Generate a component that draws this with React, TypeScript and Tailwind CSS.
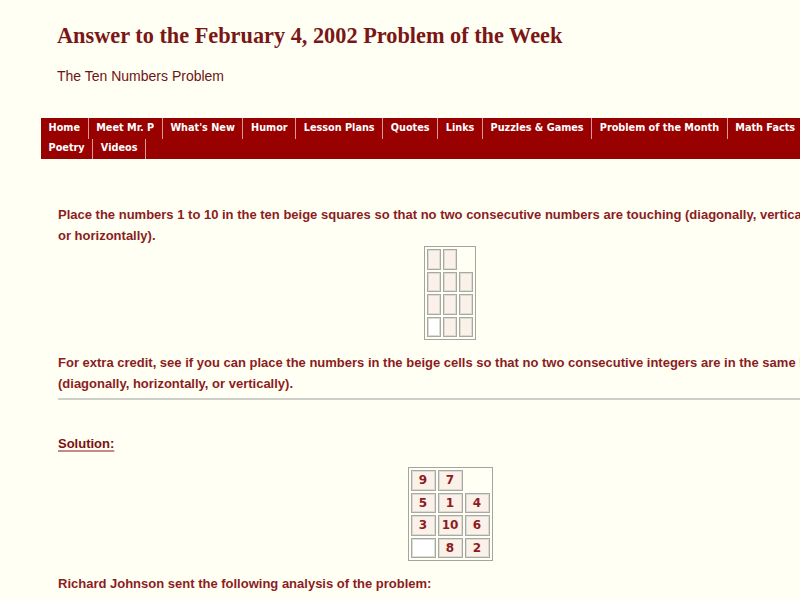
const navRow1 = ['Home', 'Meet Mr. P', "What's New", 'Humor', 'Lesson Plans', 'Quotes', 'Links', 'Puzzles & Games', 'Problem of the Month', 'Math Facts'];
const navRow2 = ['Poetry', 'Videos'];

// null = no cell, '' = white cell, '#' = empty beige cell
const puzzle: (string | null)[][] = [
  ['#', '#', null],
  ['#', '#', '#'],
  ['#', '#', '#'],
  ['', '#', '#'],
];

const solution: (string | null)[][] = [
  ['9', '7', null],
  ['5', '1', '4'],
  ['3', '10', '6'],
  ['', '8', '2'],
];

function NavRow({ items }: { items: string[] }) {
  return (
    <div className="flex h-[20.5px]">
      {items.map((item) => (
        <div
          key={item}
          className="flex items-center px-[7.6px] border-r border-[#d99a9a] text-white font-bold text-[9.7px] font-['DejaVu_Sans',sans-serif] whitespace-nowrap"
        >
          {item}
        </div>
      ))}
    </div>
  );
}

function Grid({ cells, cellW }: { cells: (string | null)[][]; cellW: string }) {
  return (
    <table className="mx-auto border border-[#a4a4a0] border-separate border-spacing-[2px]">
      <tbody>
        {cells.map((row, r) => (
          <tr key={r}>
            {row.map((c, i) =>
              c === null ? (
                <td key={i} className={`${cellW} h-[20.5px] p-0 leading-none`} />
              ) : (
                <td
                  key={i}
                  className={`${cellW} h-[20.5px] p-0 leading-none text-center align-middle border border-[#a8a8a4] shadow-[inset_0_0_0_1px_#dcdcd6] ${
                    c === '' ? 'bg-white' : 'bg-[#fbf1e8]'
                  } text-[12px] font-bold text-[#8c1c22] font-['DejaVu_Sans',sans-serif]`}
                >
                  {c === '#' ? '' : c}
                </td>
              )
            )}
          </tr>
        ))}
      </tbody>
    </table>
  );
}

export default function App() {
  return (
    <div className="w-full min-h-screen overflow-hidden bg-[#fffff4]">
      <div className="w-[900px] pl-[41px] pt-[22px] pb-10">
        {/* Header */}
        <div className="pl-4">
          <h1 className="text-[22.3px] leading-[28px] font-bold text-[#7b1616] font-['Liberation_Serif',serif]">
            Answer to the February 4, 2002 Problem of the Week
          </h1>
          <p className="mt-[18px] text-[14px] leading-4 text-[#6e1414] font-['Liberation_Sans',sans-serif]">
            The Ten Numbers Problem
          </p>
        </div>

        {/* Nav */}
        <nav className="mt-[34px] w-[818px] bg-[#990000]">
          <NavRow items={navRow1} />
          <NavRow items={navRow2} />
        </nav>

        {/* Content */}
        <div className="w-[801px] pl-[17px] text-[13px] leading-[21px] font-bold text-[#8c1c22] font-['Liberation_Sans',sans-serif] whitespace-nowrap">
          <p className="mt-[45px]">
            Place the numbers 1 to 10 in the ten beige squares so that no two consecutive numbers are touching (diagonally, vertically,
            <br />
            or horizontally).
          </p>
          <Grid cells={puzzle} cellW="w-[14px]" />
          <p className="mt-3">
            For extra credit, see if you can place the numbers in the beige cells so that no two consecutive integers are in the same line
            <br />
            (diagonally, horizontally, or vertically).
          </p>
          <hr className="mt-1 border-t-2 border-[#cfcfca]" />

          <p className="mt-[36px] text-[13px] leading-[15px] font-bold text-[#7a1010] underline decoration-2 decoration-[#c98888] underline-offset-2">
            Solution:
          </p>
          <div className="mt-4">
            <Grid cells={solution} cellW="w-[25px]" />
          </div>
          <p className="mt-3">Richard Johnson sent the following analysis of the problem:</p>
        </div>
      </div>
    </div>
  );
}
